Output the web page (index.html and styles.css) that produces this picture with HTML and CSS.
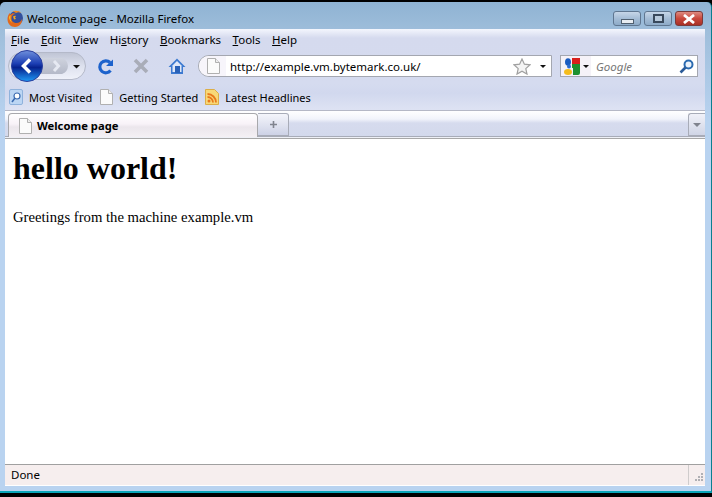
FILE: index.html
```html
<!DOCTYPE html>
<html lang="en">
<head>
  <meta charset="UTF-8">
  <meta name="viewport" content="width=device-width, initial-scale=1.0">
  <title>Welcome page - Mozilla Firefox</title>
  <link rel="stylesheet" href="styles.css">
</head>
<body>
  <div class="window">
    <!-- Title bar -->
    <div class="titlebar">
      <svg class="fx-logo" width="17" height="17" viewBox="0 0 17 17">
        <circle cx="9" cy="8" r="7" fill="#33509c"/>
        <path d="M9 4c-3 0-4.500 2-4.500 4.500 0 3 2.500 4.500 5 4.500 2.500 0 4.500-1.500 5.500-4 .5 4-2.500 8-7 8C3.500 17 .5 13.500.5 9 .5 6.500 1.500 4 3 3c0 1 .3 1.500.8 2C4.500 3 6.500 2.500 9 4z" fill="#e2691c"/>
        <path d="M5 1.500C8 0 12 .5 14.500 3c-2-1-4-1-5.500 0-1-.8-2.500-1.500-4-1.500z" fill="#f08a22"/>
        <path d="M2 7c.5-1 1-1.500 1.800-2-.5 2-.8 5 1.700 8-2-1-3.500-3.500-3.500-6z" fill="#f7c02c"/>
        <path d="M6 6.500c1-.8 2-1 3-.5l-1 1.500 1 1.500-2 .5z" fill="#f5a623"/>
      </svg>
      <span class="title-text">Welcome page - Mozilla Firefox</span>
      <div class="win-buttons">
        <div class="win-btn"><span class="glyph-min"></span></div>
        <div class="win-btn"><span class="glyph-max"></span></div>
        <div class="win-btn win-close">
          <svg width="14" height="10" viewBox="0 0 14 10"><path d="M2 1l10 8M12 1L2 9" stroke="#fff" stroke-width="2.800" fill="none"/></svg>
        </div>
      </div>
    </div>

    <div class="client">
      <div class="chrome">
        <!-- Menu -->
        <div class="menubar">
          <span><u>F</u>ile</span>
          <span><u>E</u>dit</span>
          <span><u>V</u>iew</span>
          <span>Hi<u>s</u>tory</span>
          <span><u>B</u>ookmarks</span>
          <span><u>T</u>ools</span>
          <span><u>H</u>elp</span>
        </div>

        <!-- Navigation -->
        <div class="navbar">
          <svg class="backfwd" width="80" height="34" viewBox="0 0 80 34">
            <defs>
              <linearGradient id="pill" x1="0" y1="0" x2="0" y2="1">
                <stop offset="0" stop-color="#bfc4d4"/><stop offset="0.5" stop-color="#dde1ee"/><stop offset="1" stop-color="#f0f2fa"/>
              </linearGradient>
              <linearGradient id="fwd" x1="0" y1="0" x2="0" y2="1">
                <stop offset="0" stop-color="#cfd3de"/><stop offset="1" stop-color="#b4b9c8"/>
              </linearGradient>
              <linearGradient id="back" x1="0" y1="0" x2="0" y2="1">
                <stop offset="0" stop-color="#6f90dc"/><stop offset="0.42" stop-color="#1d3fb4"/><stop offset="0.55" stop-color="#07228e"/><stop offset="1" stop-color="#1f9af5"/>
              </linearGradient>
            </defs>
            <rect x="0.500" y="3.500" width="77" height="27" rx="13.500" fill="url(#pill)" stroke="#b4b9c9"/>
            <path d="M33 9h21a9 9 0 0 1 6 8 9 9 0 0 1-6 8H33z" fill="url(#fwd)"/>
            <path d="M46 12l4.500 5-4.500 5" stroke="#e6e9f2" stroke-width="3" fill="none"/>
            <path d="M65 16h7l-3.500 3.500z" fill="#111"/>
            <circle cx="19" cy="17" r="15.500" fill="url(#back)" stroke="#2a3f9e"/>
            <path d="M22 10.500L15.500 17l6.500 6.500" stroke="#fff" stroke-width="3.500" fill="none"/>
          </svg>

          <svg class="nav-reload" width="17" height="17" viewBox="0 0 17 17">
            <path d="M13 4.500A6 6 0 1 0 13.500 12.500" stroke="#1c62cc" stroke-width="3.200" fill="none"/>
            <path d="M9 8L16 1.500V8z" fill="#1c62cc"/>
          </svg>
          <svg class="nav-stop" width="16" height="16" viewBox="0 0 16 16">
            <path d="M2 2l12 12M14 2L2 14" stroke="#a9adb8" stroke-width="3.600" fill="none"/>
          </svg>
          <svg class="nav-home" width="18" height="18" viewBox="0 0 18 18">
            <path d="M9 1.500L.5 10H3v7h12v-7h2.500z" fill="#3d7ad0"/>
            <path d="M9 4L4.500 8.500V15h9V8.500z" fill="#dfe8f8"/>
            <rect x="7" y="9" width="5" height="7" fill="#2a62b8"/>
          </svg>

          <div class="urlbar">
            <div class="url-favicon">
              <svg class="page-icon" width="14" height="16" viewBox="0 0 14 16"><path d="M1.500.5h8l4 4v11h-12z" fill="#fbfbfb" stroke="#b0b0b0"/><path d="M9.500.5v4h4" fill="#eee" stroke="#b0b0b0"/></svg>
            </div>
            <span class="url-text">http://example.vm.bytemark.co.uk/</span>
            <svg class="star" width="18" height="17" viewBox="0 0 18 17"><path d="M9 1l2.400 5.200 5.600.6-4.200 3.800 1.200 5.500L9 13.300 4 16.100l1.200-5.500L1 6.800l5.600-.6z" fill="#f4f4f4" stroke="#a0a0a0" stroke-width="1.200"/></svg>
            <span class="arrow url-arrow"></span>
          </div>

          <div class="searchbar">
            <div class="engine">
              <svg width="16" height="17" viewBox="0 0 16 17">
                <rect x="8" y="0" width="8" height="6" fill="#d8201c"/>
                <path d="M8 6h8v9q0 2-2 2H9V10H8z" fill="#1d9130"/>
                <ellipse cx="4" cy="4" rx="3" ry="3.800" fill="#1a5cc0"/>
                <ellipse cx="5" cy="8.500" rx="2" ry="2" fill="#2a6cd0"/>
                <ellipse cx="4" cy="14" rx="4" ry="3" fill="#f4bc1c"/>
              </svg>
              <span class="arrow"></span>
            </div>
            <span class="search-text">Google</span>
            <svg class="loupe" width="15" height="15" viewBox="0 0 15 15">
              <circle cx="9.500" cy="5.500" r="4" stroke="#2a6ab0" stroke-width="2" fill="#eaf2fb"/>
              <path d="M6.500 8.500L1.500 13.500" stroke="#2a5a98" stroke-width="2.600"/>
            </svg>
          </div>
        </div>

        <!-- Bookmarks -->
        <div class="bookmarks">
          <div class="bookmark">
            <svg width="14" height="16" viewBox="0 0 14 16"><rect x=".5" y=".5" width="13" height="15" rx="1.500" fill="#bcd6f4" stroke="#8fb2dc"/><circle cx="8" cy="7" r="3" fill="#fff" stroke="#3a6ab0" stroke-width="1.200"/><path d="M6 9l-3 4" stroke="#3a6ab0" stroke-width="1.600"/></svg>
            <span>Most Visited</span>
          </div>
          <div class="bookmark">
            <svg class="page-icon" width="14" height="16" viewBox="0 0 14 16"><path d="M1.500.5h8l4 4v11h-12z" fill="#fbfbfb" stroke="#b0b0b0"/><path d="M9.500.5v4h4" fill="#eee" stroke="#b0b0b0"/></svg>
            <span>Getting Started</span>
          </div>
          <div class="bookmark">
            <svg width="14" height="16" viewBox="0 0 14 16"><path d="M.5.5h9l4 4v11H.5z" fill="#f8d878" stroke="#dcae48"/><circle cx="4" cy="12" r="1.500" fill="#e8781c"/><path d="M2.500 8a5.500 5.500 0 0 1 5.500 5.500M2.500 5a8.500 8.500 0 0 1 8.500 8.500" stroke="#e8781c" stroke-width="1.800" fill="none"/></svg>
            <span>Latest Headlines</span>
          </div>
        </div>

        <!-- Tabs -->
        <div class="tabstrip">
          <div class="tab">
            <svg class="page-icon" width="14" height="16" viewBox="0 0 14 16"><path d="M1.500.5h8l4 4v11h-12z" fill="#fbfbfb" stroke="#b0b0b0"/><path d="M9.500.5v4h4" fill="#eee" stroke="#b0b0b0"/></svg>
            <span>Welcome page</span>
          </div>
          <div class="newtab">
            <svg width="7" height="7" viewBox="0 0 7 7"><path d="M3.500 0v7M0 3.500h7" stroke="#80848f" stroke-width="1.600"/></svg>
          </div>
          <div class="tab-spacer"></div>
          <div class="tablist"><span class="tablist-arrow"></span></div>
        </div>
      </div>

      <!-- Page -->
      <div class="content">
        <h1>hello world!</h1>
        <p>Greetings from the machine example.vm</p>
      </div>

      <div class="statusbar">
        <span class="status-text">Done</span>
        <div class="grip">
          <svg width="12" height="12" viewBox="0 0 12 12" fill="#b0b0b4">
            <rect x="8" y="0" width="2" height="2"/>
            <rect x="5" y="3" width="2" height="2"/><rect x="8" y="3" width="2" height="2"/>
            <rect x="2" y="6" width="2" height="2"/><rect x="5" y="6" width="2" height="2"/><rect x="8" y="6" width="2" height="2"/>
          </svg>
        </div>
      </div>
    </div>
  </div>
</body>
</html>
```

FILE: styles.css
```css
html, body {
  margin: 0;
  height: 100%;
  overflow: hidden;
  background: #000;
}
.window {
  box-sizing: border-box;
  height: 491px;
  margin-top: 2px;
  padding: 0 0 5px 5px;
  display: flex;
  flex-direction: column;
  background: linear-gradient(#8fb3d3, #9fbedb 30px, #b9d3f0 120px);
  border-bottom: 2px solid #0aa5b8;
  border-right: 1px solid #0a7f90;
  border-radius: 5px 5px 0 0;
  font-family: "Noto Sans", sans-serif;
  font-size: 11.5px;
  color: #000;
}
.titlebar {
  height: 27px;
  flex: none;
  display: flex;
  align-items: center;
}
.fx-logo {
  margin: 5px 0 0 2px;
}
.title-text {
  margin: 5px 0 0 3px;
  white-space: nowrap;
}
.win-buttons {
  margin-left: auto;
  margin-right: 8px;
  margin-top: 6px;
  display: flex;
  gap: 3px;
}
.win-btn {
  box-sizing: border-box;
  width: 28px;
  height: 15px;
  display: flex;
  align-items: center;
  justify-content: center;
  border: 1px solid #5f7690;
  border-radius: 3px;
  background: linear-gradient(#c6d6e8, #a5bdd6 50%, #8eabc8);
}
.win-close {
  border-color: #7a3a3a;
  background: linear-gradient(#dd8a80, #c9483c 50%, #a83026);
}
.glyph-min {
  width: 11px;
  height: 3px;
  margin-top: 5px;
  background: #e8edf2;
  border: 1px solid #506070;
}
.glyph-max {
  box-sizing: border-box;
  width: 11px;
  height: 9px;
  background: #b8cadc;
  border: 2px solid #39495c;
}

.client {
  flex: 1;
  min-height: 0;
  margin-right: 6px;
  display: flex;
  flex-direction: column;
  background: #fff;
}
.chrome {
  flex: none;
  background: linear-gradient(#f4f6fd, #d5daee 9px, #d5dbef 55px, #d1d8ee 64px, #dde2f3 80px);
}
.menubar {
  height: 21px;
  display: flex;
  align-items: center;
  gap: 11.5px;
  padding-left: 6px;
}
.navbar {
  height: 32px;
  display: flex;
  align-items: center;
}
.backfwd {
  margin-left: 3px;
  flex: none;
}
.nav-reload {
  margin-left: 9px;
}
.nav-stop {
  margin-left: 19px;
}
.nav-home {
  margin-left: 19px;
}
.urlbar {
  box-sizing: border-box;
  width: 354px;
  height: 22px;
  margin-left: 12px;
  display: flex;
  align-items: center;
  background: #fff;
  border: 1px solid #a4a7b0;
  border-radius: 11px 0 0 11px;
}
.url-favicon {
  width: 27px;
  height: 20px;
  flex: none;
  display: flex;
  align-items: center;
  padding-left: 7px;
  box-sizing: border-box;
  background: #f7f5fb;
  border-radius: 10px 0 0 10px;
}
.url-text {
  margin-left: 4px;
  white-space: nowrap;
}
.star {
  margin-left: auto;
}
.arrow {
  width: 0;
  height: 0;
  border: 3px solid transparent;
  border-top: 3px solid #111;
  border-bottom: 0;
}
.url-arrow {
  margin: 0 5px 0 9px;
}
.searchbar {
  box-sizing: border-box;
  width: 138px;
  height: 22px;
  margin-left: 8px;
  display: flex;
  align-items: center;
  background: #fff;
  border: 1px solid #a4a7b0;
}
.engine {
  width: 30px;
  height: 20px;
  flex: none;
  box-sizing: border-box;
  padding-left: 3px;
  display: flex;
  align-items: center;
  gap: 3px;
  background: #f5f2f8;
}
.search-text {
  margin-left: 5px;
  color: #777;
  font-style: italic;
}
.loupe {
  margin-left: auto;
  margin-right: 3px;
}
.bookmarks {
  box-sizing: border-box;
  height: 28px;
  padding: 2px 0 0 4px;
  display: flex;
  align-items: center;
  gap: 7px;
  font-size: 11px;
}
.bookmark {
  display: flex;
  align-items: center;
  gap: 6px;
  white-space: nowrap;
}
.tabstrip {
  box-sizing: border-box;
  height: 29px;
  display: flex;
  align-items: flex-start;
  padding-top: 2px;
  border-top: 1px solid #b5b8c6;
  border-bottom: 1px solid #a8a8a8;
  background: linear-gradient(#fff, #f2f4fb 8px, #d6dbee 12px, #d3d9ec 25px, #a8acb8 25px, #a8acb8 26px, #eef0f6 26px);
}
.tab {
  box-sizing: border-box;
  width: 250px;
  height: 24px;
  margin-left: 3px;
  flex: none;
  display: flex;
  align-items: center;
  gap: 5px;
  padding-left: 9px;
  font-size: 11.2px;
  font-weight: bold;
  border: 1px solid #a8a8ac;
  border-bottom: 0;
  border-radius: 4px 4px 0 0;
  background: linear-gradient(#fff, #f8f2f8 10px, #ebe6ec 13px, #f4f0f4);
}
.newtab {
  box-sizing: border-box;
  width: 31px;
  height: 23px;
  flex: none;
  display: flex;
  align-items: center;
  justify-content: center;
  border: 1px solid #a8acb8;
  border-left: 0;
  border-radius: 0 3px 0 0;
  background: linear-gradient(#f4f5fb, #cdd2e6);
}
.tab-spacer {
  flex: 1;
}
.tablist {
  box-sizing: border-box;
  width: 17px;
  height: 23px;
  flex: none;
  display: flex;
  align-items: center;
  justify-content: center;
  border: 1px solid #a8acb8;
  border-right: 0;
  border-radius: 3px 0 0 0;
  background: linear-gradient(#f0f1f8, #d0d5e6);
}
.tablist-arrow {
  width: 0;
  height: 0;
  border: 4px solid transparent;
  border-top: 4px solid #80838e;
  border-bottom: 0;
}
.content {
  flex: 1;
  min-height: 0;
  padding: 8px;
  font-family: "Liberation Serif", serif;
  font-size: 14.7px;
}
.content h1 {
  font-size: 32px;
  margin: 3px 0 22px;
}
.content p {
  margin: 0;
}
.statusbar {
  box-sizing: border-box;
  height: 22px;
  flex: none;
  display: flex;
  align-items: stretch;
  background: #f6eeee;
  border-top: 1px solid #a0a0a0;
  border-bottom: 1px solid #fff;
}
.status-text {
  flex: 1;
  padding-left: 6px;
  line-height: 20px;
}
.grip {
  width: 16px;
  border-left: 1px solid #cfcccc;
  display: flex;
  align-items: flex-end;
  justify-content: flex-end;
}
.page-icon {
  flex: none;
}
```
